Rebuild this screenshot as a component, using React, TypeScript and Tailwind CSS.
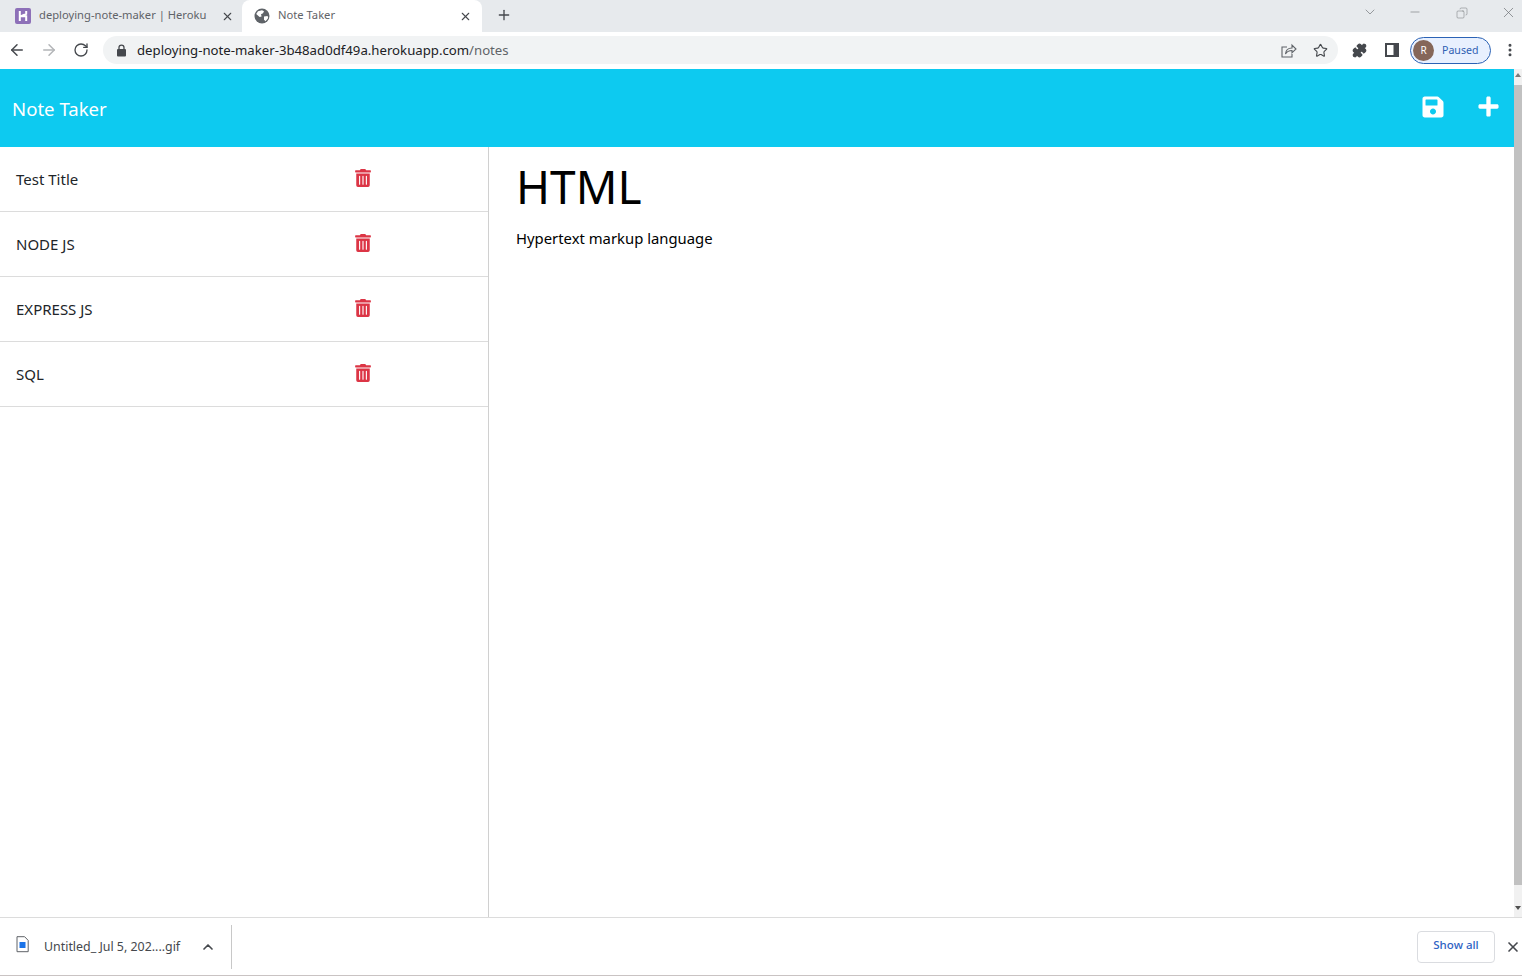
import { FaPlus, FaSave, FaTrashAlt } from "react-icons/fa";
import {
  ArrowLeft,
  ArrowRight,
  ChevronDown,
  ChevronUp,
  Copy,
  Minus,
  MoreVertical,
  Plus,
  Puzzle,
  RotateCw,
  Star,
  X,
} from "lucide-react";

const NOTES = ["Test Title", "NODE JS", "EXPRESS JS", "SQL"];

function HerokuIcon() {
  return (
    <svg width="16" height="16" viewBox="0 0 16 16" className="shrink-0">
      <rect width="16" height="16" rx="2" fill="#8d70b8" />
      <path d="M4.800 3v10M11.200 3v2.800L4.800 8.600M4.800 8.200h6.400V13" stroke="#fff" strokeWidth="2" fill="none" />
    </svg>
  );
}

function GlobeIcon() {
  return (
    <svg width="16" height="16" viewBox="0 0 16 16" className="shrink-0">
      <circle cx="8" cy="8" r="7.5" fill="#5f6368" />
      <path d="M4 3.200 8 2.200l2 1-1 2-2 1 .6 2.400-2 .4-3.400-3zM10 8.500l3.600-.4.6 1.800-2.600 3.400-1.600-1.600z" fill="#fff" />
    </svg>
  );
}

function LockIcon() {
  return (
    <svg width="11" height="13" viewBox="0 0 11 13" className="shrink-0">
      <path d="M3 5V3.600a2.500 2.500 0 0 1 5 0V5" stroke="#45484d" strokeWidth="1.3" fill="none" />
      <rect x="1" y="5" width="9" height="7.500" rx="1" fill="#45484d" />
    </svg>
  );
}

function ShareIcon() {
  return (
    <svg width="16" height="15" viewBox="0 0 16 15" className="shrink-0" fill="none" stroke="#5f6368" strokeWidth="1.1">
      <path d="M6 4H1v10h10v-3" />
      <path d="M4.500 11c.3-3.800 3-6 6.500-6V2l4 4-4 3.800V7.500c-2.800 0-5 1-6.500 3.500z" />
    </svg>
  );
}

function PanelIcon() {
  return (
    <svg width="14" height="14" viewBox="0 0 14 14" className="shrink-0">
      <rect x="1" y="1" width="12" height="12" fill="#fff" stroke="#45484d" strokeWidth="2" />
      <rect x="8.500" y="1" width="4.500" height="12" fill="#45484d" />
    </svg>
  );
}

function GifFileIcon() {
  return (
    <svg width="13" height="17" viewBox="0 0 13 17" className="shrink-0">
      <path d="M1 .7h7.600l3.600 3.700v11.300H1z" fill="#fff" stroke="#5f6368" />
      <rect x="3.500" y="6" width="6" height="6" fill="#1a73e8" />
    </svg>
  );
}

function BrowserTabs() {
  return (
    <div className="flex h-8 shrink-0 bg-[#e7eaed] text-[11.2px] text-[#5f6368]">
      <div className="flex w-[242px] items-center pl-[15px]">
        <HerokuIcon />
        <span className="ml-2 whitespace-nowrap pb-[2px]">deploying-note-maker | Heroku</span>
        <X size={13} strokeWidth={2} className="ml-[15px] text-[#45484d]" />
      </div>
      <div className="flex w-[240px] items-center rounded-t-lg bg-white pl-3">
        <GlobeIcon />
        <span className="ml-2 pb-[2px]">Note Taker</span>
        <X size={13} strokeWidth={2} className="ml-auto mr-[10px] text-[#45484d]" />
      </div>
      <Plus size={16} strokeWidth={2} className="ml-[14px] mt-[7px] text-[#45484d]" />
      <div className="ml-auto flex items-start text-[#6d7074]">
        <ChevronDown size={16} strokeWidth={1} className="mr-[30px] mt-1" />
        <Minus size={14} strokeWidth={1} className="mr-[34px] mt-[5px]" />
        <Copy size={12} strokeWidth={1} className="mr-[32px] mt-[7px] -scale-x-100" />
        <X size={17} strokeWidth={1} className="mr-[5px] mt-1" />
      </div>
    </div>
  );
}

function BrowserToolbar() {
  return (
    <div className="flex h-[37px] shrink-0 items-center bg-white pb-[1px]">
      <ArrowLeft size={18} strokeWidth={2} className="ml-2 text-[#45484d]" />
      <ArrowRight size={18} strokeWidth={2} className="ml-[14px] text-[#b3b5b8]" />
      <RotateCw size={16} strokeWidth={2} className="ml-[15px] text-[#45484d]" />
      <div className="ml-[14px] flex h-7 w-[1235px] items-center rounded-full bg-[#f1f3f4] pl-[13px]">
        <LockIcon />
        <span className="ml-[10px] pt-[2px] text-[13.2px] text-[#202124]">
          deploying-note-maker-3b48ad0df49a.herokuapp.com<span className="text-[#5f6368]">/notes</span>
        </span>
        <div className="ml-auto">
          <ShareIcon />
        </div>
        <Star size={15} strokeWidth={1.8} className="ml-[16px] mr-[10px] text-[#45484d]" />
      </div>
      <Puzzle size={15} fill="#45484d" className="ml-[14px] text-[#45484d]" />
      <div className="ml-[18px]">
        <PanelIcon />
      </div>
      <div className="ml-[11px] flex h-[27px] w-[81px] items-center rounded-full border border-[#2b62b5] bg-[#e8f0fe] pl-[2px]">
        <div className="flex h-[21px] w-[21px] items-center justify-center rounded-full bg-[#85675a] text-[10px] text-white">R</div>
        <span className="ml-2 pt-[2px] text-[10.6px] text-[#2f5fb3]">Paused</span>
      </div>
      <MoreVertical size={16} strokeWidth={2.5} className="ml-[11px] text-[#45484d]" />
    </div>
  );
}

function NoteRow({ title }: { title: string }) {
  return (
    <li className="flex h-[65px] items-center border-b border-[#dcdcdc] pb-[3px] pl-4 text-[15px] text-[#212529]">
      <span className="flex-1 pt-[4px]">{title}</span>
      <FaTrashAlt size={18} className="mr-[116px] text-[#dc3545]" />
    </li>
  );
}

function NoteApp() {
  return (
    <div className="flex min-w-0 flex-1 flex-col">
      <header className="flex h-[78px] shrink-0 items-start bg-[#0dcaf0] text-white">
        <h1 className="ml-3 mt-[26px] text-[18.6px] leading-7">Note Taker</h1>
        <FaSave size={24} className="ml-auto mt-[26px]" />
        <FaPlus size={23} className="ml-[32px] mr-[14px] mt-[26px]" />
      </header>
      <div className="flex min-h-0 flex-1">
        <ul className="w-[489px] shrink-0 border-r border-[#d0d0d0]">
          {NOTES.map((title) => (
            <NoteRow key={title} title={title} />
          ))}
        </ul>
        <main className="flex-1 pl-[27px] pt-[9px] text-black">
          <div className="text-[46px] leading-[60px]">HTML</div>
          <p className="mt-[10px] text-[14.85px] leading-6">Hypertext markup language</p>
        </main>
      </div>
    </div>
  );
}

function Scrollbar() {
  return (
    <div className="flex w-[8px] shrink-0 flex-col items-center bg-[#f1f1f1]">
      <svg width="8" height="16" viewBox="0 0 8 16" className="shrink-0">
        <path d="M4 4 7 8H1z" fill="#7a7a7a" />
      </svg>
      <div className="w-full flex-1 bg-[#c1c1c1]" />
      <svg width="8" height="32" viewBox="0 0 8 32" className="shrink-0">
        <path d="M4 25 1 21h6z" fill="#505050" />
      </svg>
    </div>
  );
}

function DownloadBar() {
  return (
    <div className="flex h-[59px] shrink-0 items-center border-y border-b-[#c9c3c3] border-t-[#dcdcdc] bg-white text-[#45484d]">
      <div className="mb-[4px] ml-[16px]">
        <GifFileIcon />
      </div>
      <span className="ml-[15px] pt-[2px] text-[12.4px]">Untitled_ Jul 5, 202....gif</span>
      <ChevronUp size={16} strokeWidth={2.5} className="ml-5" />
      <div className="ml-[15px] h-11 w-px bg-[#c8c8c8]" />
      <div className="ml-auto flex h-8 w-[78px] items-center justify-center rounded border border-[#dadce0] pb-[3px] text-[11.5px] font-medium text-[#2f63c4]">
        Show all
      </div>
      <X size={16} strokeWidth={2.5} className="ml-[10px] mr-[1px]" />
    </div>
  );
}

export default function App() {
  return (
    <div className="flex h-[976px] flex-col overflow-hidden bg-white font-['Noto_Sans','Open_Sans',sans-serif]">
      <BrowserTabs />
      <BrowserToolbar />
      <div className="flex min-h-0 flex-1">
        <NoteApp />
        <Scrollbar />
      </div>
      <DownloadBar />
    </div>
  );
}
